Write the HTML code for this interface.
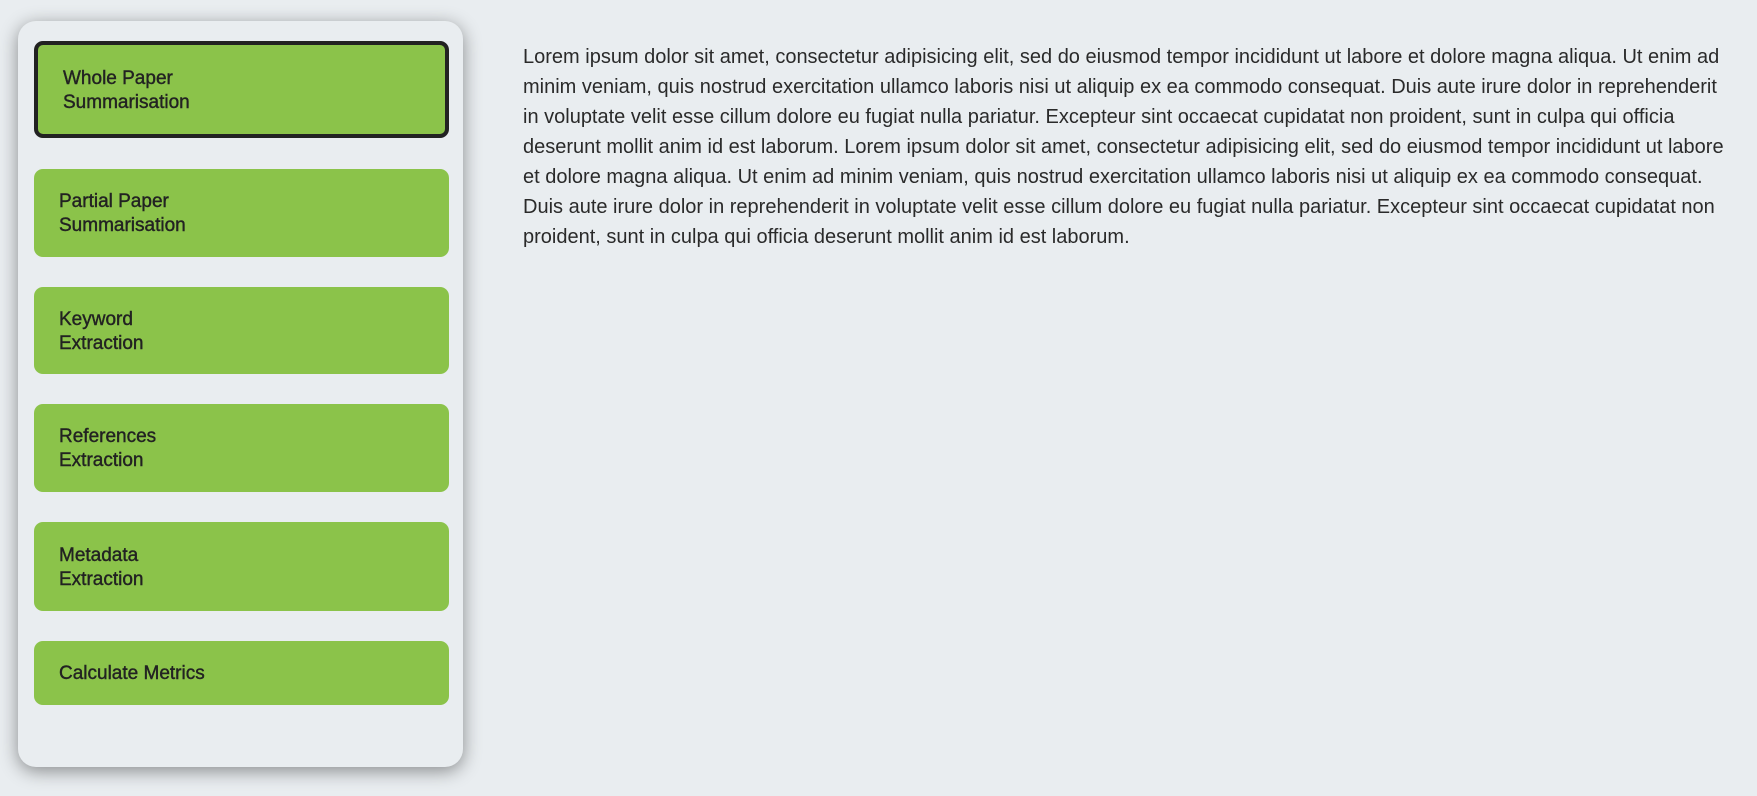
<!DOCTYPE html>
<html><head><meta charset="utf-8"><style>
html,body{margin:0;padding:0}
body{width:1757px;height:796px;background:#e9edf0;font-family:"Liberation Sans",sans-serif;position:relative;overflow:hidden;color:#222}
.panel{position:absolute;left:18px;top:21px;width:445px;height:746px;background:#e9edf0;border-radius:18px;box-shadow:0 4px 18px rgba(0,0,0,.42)}
.btn{position:absolute;left:16px;width:415px;background:#8bc34a;border-radius:9px;box-sizing:border-box;display:flex;align-items:center;padding-left:25px;padding-top:2px;font-size:19px;line-height:24px;color:#222;-webkit-text-stroke:0.4px #222}
.sel{border:4px solid #222;padding-left:25px}
.main{position:absolute;left:523px;top:42px;font-size:20px;line-height:30px;color:#2a2a2a;white-space:nowrap}
</style></head><body>
<div class="panel">
<div class="btn sel" style="top:20px;height:97px">Whole Paper<br>Summarisation</div>
<div class="btn" style="top:148px;height:88px">Partial Paper<br>Summarisation</div>
<div class="btn" style="top:266px;height:87px">Keyword<br>Extraction</div>
<div class="btn" style="top:383px;height:88px">References<br>Extraction</div>
<div class="btn" style="top:501px;height:89px">Metadata<br>Extraction</div>
<div class="btn" style="top:620px;height:64px">Calculate Metrics</div>
</div>
<div class="main">Lorem ipsum dolor sit amet, consectetur adipisicing elit, sed do eiusmod tempor incididunt ut labore et dolore magna aliqua. Ut enim ad<br>minim veniam, quis nostrud exercitation ullamco laboris nisi ut aliquip ex ea commodo consequat. Duis aute irure dolor in reprehenderit<br>in voluptate velit esse cillum dolore eu fugiat nulla pariatur. Excepteur sint occaecat cupidatat non proident, sunt in culpa qui officia<br>deserunt mollit anim id est laborum. Lorem ipsum dolor sit amet, consectetur adipisicing elit, sed do eiusmod tempor incididunt ut labore<br>et dolore magna aliqua. Ut enim ad minim veniam, quis nostrud exercitation ullamco laboris nisi ut aliquip ex ea commodo consequat.<br>Duis aute irure dolor in reprehenderit in voluptate velit esse cillum dolore eu fugiat nulla pariatur. Excepteur sint occaecat cupidatat non<br>proident, sunt in culpa qui officia deserunt mollit anim id est laborum.</div>
</body></html>
